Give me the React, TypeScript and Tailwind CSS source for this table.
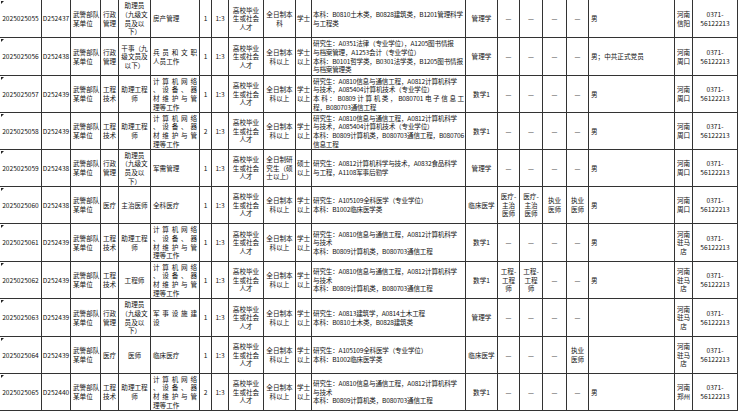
import React from "react";

const UNIT = "武警部队\n某单位";
const TALENT = "高校毕业\n生或社会\n人才";
const NET = "~计算机网络\n~、设备、器\n~材维护与管\n理等工作";
const D = "—";
const TEL = "0371-\n56122213";
const SPEC_NET2 = "研究生：A0810信息与通信工程，A0812计算机科学\n与技术\n本科：B0809计算机类，B080703通信工程";
const SPEC_MED = "研究生：A105109全科医学（专业学位）\n本科：B1002临床医学类";
const CLERK = "助理员\n（九级文\n员及以\n下）";

const ROWS: string[][] = [
  ["2025025055", "D252437", UNIT, "行政\n管理", CLERK, "房产管理", "1", "1:3", TALENT, "全日制本\n科", "学士", "本科：B0810土木类，B0828建筑类，B1201管理科学\n与工程类", "管理学", D, D, D, D, "男", "河南\n信阳", TEL],
  ["2025025056", "D252438", UNIT, "行政\n管理", "干事（九\n级文员及\n以下）", "~兵员和文职\n人员工作", "1", "1:3", TALENT, "全日制本\n科以上", "学士\n以上", "研究生：A0351法律（专业学位），A1205图书情报\n与档案管理，A1253会计（专业学位）\n本科：B0101哲学类，B0301法学类，B1205图书情报\n与档案管理类", "管理学", D, D, D, D, "男；中共正式党员", "河南\n周口", TEL],
  ["2025025057", "D252439", UNIT, "工程\n技术", "助理工程\n师", NET, "1", "1:3", TALENT, "全日制本\n科以上", "学士\n以上", "研究生：A0810信息与通信工程，A0812计算机科学\n与技术，A085404计算机技术（专业学位）\n~本科：B0809计算机类，B080701电子信息工\n程，B080703通信工程", "数学1", D, D, D, D, "男", "河南\n周口", TEL],
  ["2025025058", "D252439", UNIT, "工程\n技术", "助理工程\n师", NET, "2", "1:3", TALENT, "全日制本\n科以上", "学士\n以上", "研究生：A0810信息与通信工程，A0812计算机科学\n与技术，A085404计算机技术（专业学位）\n本科：B0809计算机类，B080703通信工程，B080706\n信息工程", "数学1", D, D, D, D, "男", "河南\n周口", TEL],
  ["2025025059", "D252438", UNIT, "行政\n管理", CLERK, "军需管理", "1", "1:3", TALENT, "全日制研\n究生（硕\n士以上）", "硕士\n以上", "研究生：A0812计算机科学与技术，A0832食品科学\n与工程，A1108军事后勤学", "管理学", D, D, D, D, "男", "河南\n周口", TEL],
  ["2025025060", "D252438", UNIT, "医疗", "主治医师", "全科医疗", "1", "1:3", TALENT, "全日制本\n科以上", "学士\n以上", SPEC_MED, "临床医学", "医疗-\n主治\n医师", "医疗-\n主治\n医师", "执业\n医师", "执业\n医师", "男", "河南\n周口", TEL],
  ["2025025061", "D252439", UNIT, "工程\n技术", "助理工程\n师", NET, "1", "1:3", TALENT, "全日制本\n科以上", "学士\n以上", SPEC_NET2, "数学1", D, D, D, D, "男", "河南\n驻马\n店", TEL],
  ["2025025062", "D252439", UNIT, "工程\n技术", "工程师", NET, "1", "1:3", TALENT, "全日制本\n科以上", "学士\n以上", SPEC_NET2, "数学1", "工程-\n工程\n师", "工程-\n工程\n师", D, D, "男", "河南\n驻马\n店", TEL],
  ["2025025063", "D252439", UNIT, "行政\n管理", CLERK, "~军事设施建\n设", "1", "1:3", TALENT, "全日制本\n科以上", "学士\n以上", "研究生：A0813建筑学，A0814土木工程\n本科：B0810土木类，B0828建筑类", "管理学", D, D, D, D, "", "河南\n驻马\n店", TEL],
  ["2025025064", "D252439", UNIT, "医疗", "医师", "临床医疗", "1", "1:3", TALENT, "全日制本\n科以上", "学士\n以上", SPEC_MED, "临床医学", D, D, D, "执业\n医师", "", "河南\n驻马\n店", TEL],
  ["2025025065", "D252440", UNIT, "工程\n技术", "助理工程\n师", NET, "2", "1:3", TALENT, "全日制本\n科以上", "学士\n以上", SPEC_NET2, "数学1", D, D, D, D, "男", "河南\n郑州", TEL],
];

const ALIGN: string[] = [
  "items-center text-center",
  "items-center text-center",
  "items-start text-left pl-[2px]",
  "items-center text-center",
  "items-center text-center",
  "items-stretch text-left px-[2px]",
  "items-center text-center",
  "items-center text-center",
  "items-center text-center",
  "items-center text-center",
  "items-center text-center",
  "items-stretch text-left pl-[1px] pr-[1px] tracking-[-0.2px]",
  "items-center text-center",
  "items-center text-center",
  "items-center text-center",
  "items-center text-center",
  "items-center text-center",
  "items-start text-left pl-[2px]",
  "items-center text-center",
  "items-center text-center",
];

function Cell({ text, col }: { text: string; col: number }) {
  const lines = text === "" ? [] : text.split("\n");
  return (
    <div
      className={`relative flex flex-col justify-center border-r border-b border-[#333] overflow-visible ${ALIGN[col]}`}
    >
      {col === 0 && (
        <span className="absolute left-[1px] top-[1px] h-0 w-0 border-t-[3px] border-r-[3px] border-t-[#222] border-r-transparent" />
      )}
      {lines.map((l, i) =>
        l.startsWith("~") ? (
          <div key={i} className="whitespace-nowrap [text-align-last:justify] text-justify">
            {l.slice(1)}
          </div>
        ) : (
          <div key={i} className="whitespace-nowrap">
            {l}
          </div>
        )
      )}
    </div>
  );
}

export default function App() {
  return (
    <div
      lang="zh-CN"
      className="w-[740px] h-[411px] overflow-hidden bg-white text-[#111] text-[6.6px] leading-[8.6px] font-['Noto_Sans_CJK_SC','Noto_Sans',sans-serif]"
    >
      <div className="grid grid-cols-[42px_29px_30px_18px_32px_49px_12px_17px_35px_32px_16px_154px_32px_22px_23px_24px_22px_86px_18px_45px] grid-rows-[38px_38px_37px_37px_37px_37px_38px_37px_38px_37px_37px] w-[738px]">
        {ROWS.map((row, r) =>
          row.map((cell, c) => <Cell key={`${r}-${c}`} text={cell} col={c} />)
        )}
      </div>
    </div>
  );
}
